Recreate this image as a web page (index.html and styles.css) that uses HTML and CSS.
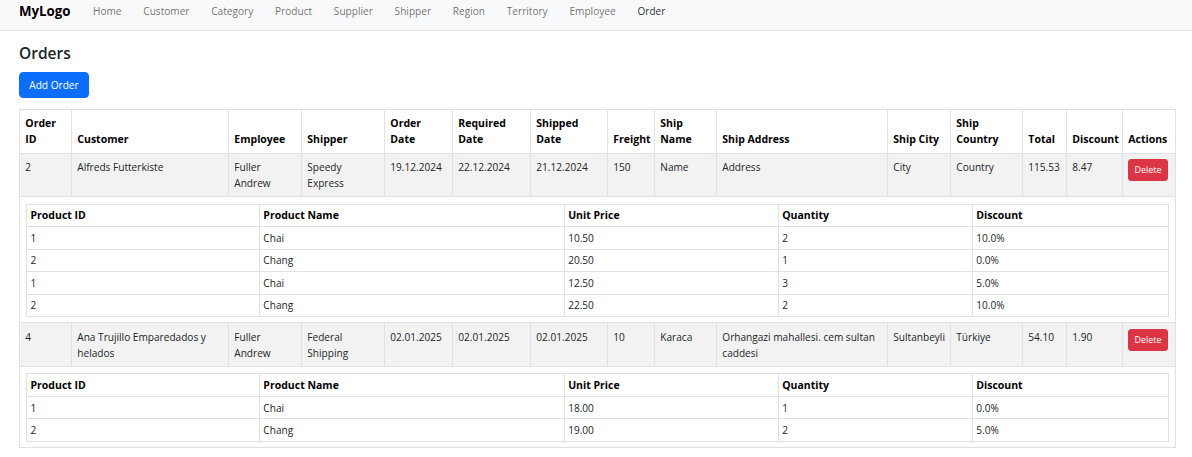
FILE: index.html
```html
<!DOCTYPE html>
<html lang="en">
<head>
<meta charset="utf-8">
<title>Orders</title>
<link rel="stylesheet" href="styles.css">
</head>
<body>
<nav class="navbar">
  <a class="brand" href="#">MyLogo</a>
  <ul class="nav">
    <li><a class="nav-link" href="#">Home</a></li>
    <li><a class="nav-link" href="#">Customer</a></li>
    <li><a class="nav-link" href="#">Category</a></li>
    <li><a class="nav-link" href="#">Product</a></li>
    <li><a class="nav-link" href="#">Supplier</a></li>
    <li><a class="nav-link" href="#">Shipper</a></li>
    <li><a class="nav-link" href="#">Region</a></li>
    <li><a class="nav-link" href="#">Territory</a></li>
    <li><a class="nav-link" href="#">Employee</a></li>
    <li><a class="nav-link active" href="#">Order</a></li>
  </ul>
</nav>
<main class="container">
  <h1 class="page-title">Orders</h1>
  <div class="toolbar"><button class="btn btn-primary" type="button">Add Order</button></div>
  <table class="orders">
    <thead>
      <tr>
        <th class="w-id">Order ID</th>
        <th class="w-cust">Customer</th>
        <th class="w-emp">Employee</th>
        <th class="w-ship">Shipper</th>
        <th class="w-od">Order Date</th>
        <th class="w-rd">Required Date</th>
        <th class="w-sd">Shipped Date</th>
        <th class="w-fr">Freight</th>
        <th class="w-sn">Ship Name</th>
        <th class="w-sa">Ship Address</th>
        <th class="w-sc">Ship City</th>
        <th class="w-sco">Ship Country</th>
        <th class="w-tot">Total</th>
        <th class="w-dis">Discount</th>
        <th class="w-act">Actions</th>
      </tr>
    </thead>
    <tbody>
      <tr class="order-row">
        <td>2</td>
        <td>Alfreds Futterkiste</td>
        <td>Fuller Andrew</td>
        <td>Speedy Express</td>
        <td>19.12.2024</td>
        <td>22.12.2024</td>
        <td>21.12.2024</td>
        <td>150</td>
        <td>Name</td>
        <td>Address</td>
        <td>City</td>
        <td>Country</td>
        <td>115.53</td>
        <td>8.47</td>
        <td><button class="btn-del" type="button">Delete</button></td>
      </tr>
      <tr class="detail-row">
        <td class="detail-cell" colspan="15">
          <table class="details">
            <thead>
              <tr>
                <th class="d-id">Product ID</th>
                <th class="d-name">Product Name</th>
                <th class="d-price">Unit Price</th>
                <th class="d-qty">Quantity</th>
                <th class="d-dis">Discount</th>
              </tr>
            </thead>
            <tbody>
              <tr><td>1</td><td>Chai</td><td>10.50</td><td>2</td><td>10.0%</td></tr>
              <tr><td>2</td><td>Chang</td><td>20.50</td><td>1</td><td>0.0%</td></tr>
              <tr><td>1</td><td>Chai</td><td>12.50</td><td>3</td><td>5.0%</td></tr>
              <tr><td>2</td><td>Chang</td><td>22.50</td><td>2</td><td>10.0%</td></tr>
            </tbody>
          </table>
        </td>
      </tr>
      <tr class="order-row">
        <td>4</td>
        <td>Ana Trujillo Emparedados y helados</td>
        <td>Fuller Andrew</td>
        <td>Federal Shipping</td>
        <td>02.01.2025</td>
        <td>02.01.2025</td>
        <td>02.01.2025</td>
        <td>10</td>
        <td>Karaca</td>
        <td>Orhangazi mahallesi. cem sultan caddesi</td>
        <td>Sultanbeyli</td>
        <td>Türkiye</td>
        <td>54.10</td>
        <td>1.90</td>
        <td><button class="btn-del" type="button">Delete</button></td>
      </tr>
      <tr class="detail-row">
        <td class="detail-cell" colspan="15">
          <table class="details">
            <thead>
              <tr>
                <th class="d-id">Product ID</th>
                <th class="d-name">Product Name</th>
                <th class="d-price">Unit Price</th>
                <th class="d-qty">Quantity</th>
                <th class="d-dis">Discount</th>
              </tr>
            </thead>
            <tbody>
              <tr><td>1</td><td>Chai</td><td>18.00</td><td>1</td><td>0.0%</td></tr>
              <tr><td>2</td><td>Chang</td><td>19.00</td><td>2</td><td>5.0%</td></tr>
            </tbody>
          </table>
        </td>
      </tr>
    </tbody>
  </table>
</main>
</body>
</html>
```
FILE: styles.css
```css
* {
  box-sizing: border-box;
}

body {
  margin: 0;
  font-family: "Open Sans", "Noto Sans", sans-serif;
  font-size: 10.1px;
  line-height: 16px;
  color: #212529;
  background: #fff;
}

/* Navbar */
.navbar {
  display: flex;
  align-items: flex-start;
  height: 31px;
  padding: 3px 18px 0 19px;
  background: #f8f9fa;
  border-bottom: 1px solid #dee2e6;
}

.brand {
  font-size: 13.3px;
  line-height: 19px;
  font-weight: 700;
  color: #000;
  text-decoration: none;
  margin-top: -1px;
  margin-right: 11.5px;
}

.nav {
  display: flex;
  list-style: none;
  margin: 0;
  padding: 0;
}

.nav-link {
  display: block;
  padding: 0 10.9px;
  font-size: 10.1px;
  color: rgba(0, 0, 0, 0.58);
  text-decoration: none;
}

.nav-link.active {
  color: rgba(0, 0, 0, 0.85);
}

/* Content */
.container {
  padding: 0 16px 0 19px;
}

.page-title {
  margin: 13px 0 9px;
  font-size: 15.5px;
  line-height: 19px;
  font-weight: 600;
  color: #212529;
}

.toolbar {
  display: flex;
  margin-bottom: 11px;
}

.btn {
  font: inherit;
  line-height: 16px;
  padding: 4px 9.3px;
  border: 1px solid transparent;
  border-radius: 4px;
  cursor: pointer;
}

.btn-primary {
  background: #0d6efd;
  border-color: #0d6efd;
  color: #fff;
}

.btn-del {
  font-family: inherit;
  font-size: 8.9px;
  line-height: 14px;
  padding: 3px 5.3px;
  border: 1px solid #dc3545;
  border-radius: 3px;
  background: #dc3545;
  color: #fff;
  cursor: pointer;
  display: block;
}

/* Main table */
.orders {
  width: 100%;
  border-collapse: collapse;
  table-layout: fixed;
}

.orders > thead > tr > th,
.orders > tbody > tr > td {
  border: 1px solid #dee2e6;
  padding: 5.3px 5.3px;
  text-align: left;
  vertical-align: top;
}

.orders > thead > tr > th {
  vertical-align: bottom;
  font-weight: 700;
  font-size: 10.5px;
  color: #000;
}

.orders > tbody > tr.order-row > td {
  background: #f2f2f2;
}

.orders > tbody > tr > td.detail-cell {
  padding: 6.4px 6.5px 5.3px 6px;
  background: #fff;
}

.w-id { width: 52px; }
.w-cust { width: 157px; }
.w-emp { width: 73px; }
.w-ship { width: 83px; }
.w-od { width: 68px; }
.w-rd { width: 78px; }
.w-sd { width: 77px; }
.w-fr { width: 47px; }
.w-sn { width: 62px; }
.w-sa { width: 171px; }
.w-sc { width: 63px; }
.w-sco { width: 72px; }
.w-tot { width: 44px; }
.w-dis { width: 56px; }
.w-act { width: 53px; }

/* Nested details table */
.details {
  width: 100%;
  border-collapse: collapse;
  table-layout: fixed;
}

.details th,
.details td {
  border: 1px solid #dee2e6;
  padding: 2.75px 3.5px;
  text-align: left;
  vertical-align: top;
  background: #fff;
}

.details th {
  font-weight: 700;
  font-size: 10.5px;
  color: #000;
}

.d-id { width: 20.4%; }
.d-name { width: 26.7%; }
.d-price { width: 18.75%; }
.d-qty { width: 17%; }
.d-dis { width: 17.15%; }
```
